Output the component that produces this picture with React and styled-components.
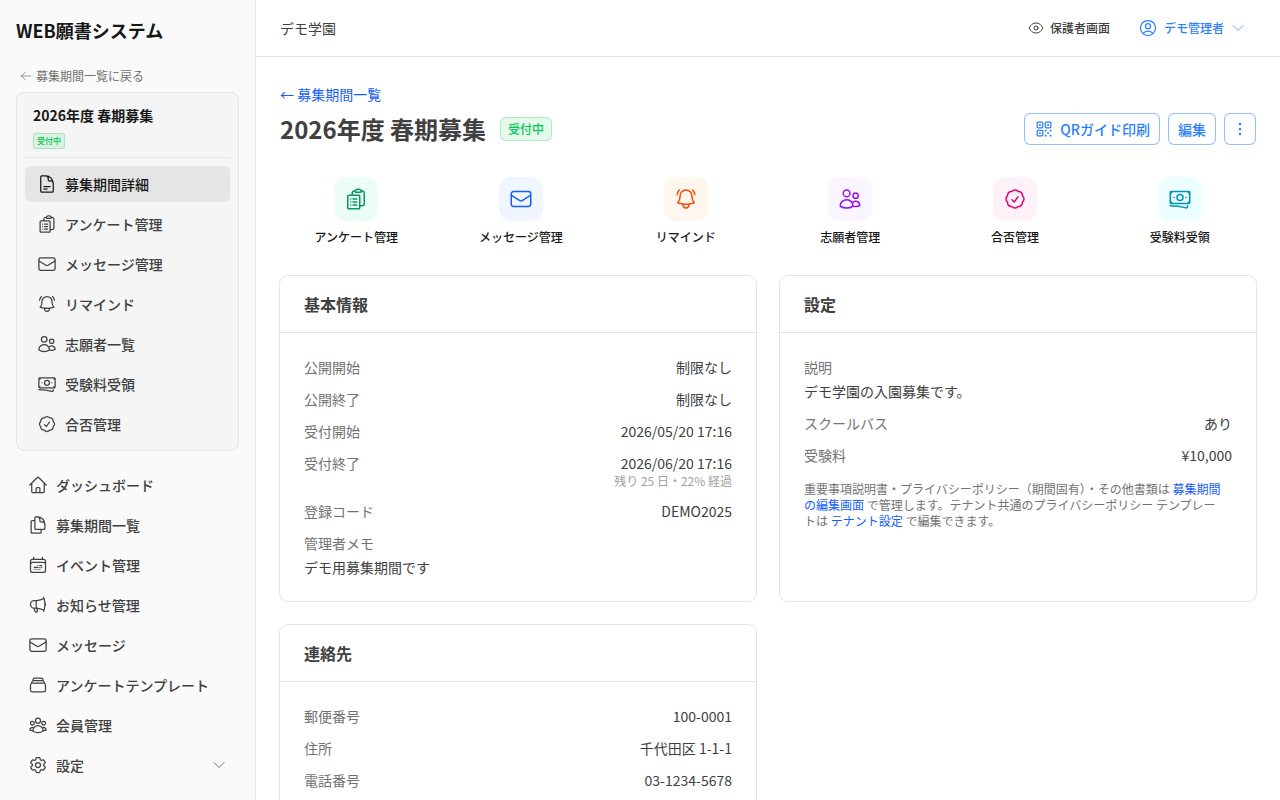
import React from "react";
import styled, { createGlobalStyle, css } from "styled-components";
import {
  HiOutlineArrowLeft,
  HiOutlineBanknotes,
  HiOutlineBellAlert,
  HiOutlineCalendarDateRange,
  HiOutlineCheckBadge,
  HiOutlineChevronDown,
  HiOutlineClipboardDocumentList,
  HiOutlineCog6Tooth,
  HiOutlineDocumentDuplicate,
  HiOutlineDocumentText,
  HiOutlineEllipsisVertical,
  HiOutlineEnvelope,
  HiOutlineEye,
  HiOutlineHome,
  HiOutlineMegaphone,
  HiOutlineQrCode,
  HiOutlineRectangleStack,
  HiOutlineUserCircle,
  HiOutlineUserGroup,
  HiOutlineUsers,
} from "react-icons/hi2";

const GlobalStyle = createGlobalStyle`
  *, *::before, *::after { box-sizing: border-box; }
  body {
    margin: 0;
    background: #ffffff;
    color: #404040;
    font-family: "Noto Sans CJK JP", sans-serif;
    font-size: 14px;
    line-height: 20px;
  }
  h1, h2, p, dl, dd, ul { margin: 0; padding: 0; }
  ul { list-style: none; }
  a { text-decoration: none; color: inherit; }
  button { font: inherit; margin: 0; cursor: pointer; }
  svg { flex: none; display: block; }
`;

const Shell = styled.div`
  display: flex;
  height: 100vh;
  overflow: hidden;
`;

const Sidebar = styled.aside`
  flex: none;
  width: 256px;
  padding: 16px;
  background: #fafafa;
  border-right: 1px solid #e5e5e5;
  overflow: hidden;
`;

const Brand = styled.div`
  font-size: 18px;
  line-height: 28px;
  font-weight: 700;
  color: #171717;
`;

const BackLink = styled.a`
  display: flex;
  align-items: center;
  gap: 4px;
  margin-top: 24px;
  padding: 0 4px;
  font-size: 12px;
  line-height: 16px;
  color: #737373;
`;

const PeriodPanel = styled.section`
  margin: 8px 0 16px;
  padding: 8px;
  background: #f5f5f5;
  border: 1px solid #e5e5e5;
  border-radius: 8px;
`;

const PeriodHead = styled.div`
  display: flex;
  flex-direction: column;
  align-items: flex-start;
  gap: 8px;
  padding: 4px 8px 8px;
  margin-bottom: 8px;
  border-bottom: 1px solid #e5e5e5;
`;

const PeriodName = styled.div`
  font-weight: 700;
  color: #171717;
`;

const Badge = styled.span`
  flex: none;
  font-weight: 500;
  color: #00c950;
  background: rgba(0, 201, 80, 0.1);
  box-shadow: inset 0 0 0 1px rgba(0, 201, 80, 0.25);
  ${({ $small }) =>
    $small
      ? css`
          padding: 2px 4px;
          border-radius: 3px;
          font-size: 8px;
          line-height: 12px;
        `
      : css`
          padding: 4px 8px;
          border-radius: 6px;
          font-size: 12px;
          line-height: 16px;
        `}
`;

const NavList = styled.ul`
  display: flex;
  flex-direction: column;
  gap: 4px;
`;

const NavLink = styled.a`
  display: flex;
  align-items: center;
  gap: 8px;
  width: 100%;
  padding: 8px 12px;
  border-radius: 6px;
  font-weight: 500;
  color: ${({ $active }) => ($active ? "#171717" : "#404040")};
  background: ${({ $active }) => ($active ? "#e5e5e5" : "transparent")};
`;

const NavToggle = styled(NavLink)`
  border: 0;
  text-align: left;
`;

const NavText = styled.span`
  flex: 1;
`;

const Faint = styled.span`
  color: ${({ $tone }) => $tone};
`;

const Column = styled.div`
  flex: 1;
  min-width: 0;
  display: flex;
  flex-direction: column;
`;

const TopBar = styled.header`
  flex: none;
  display: flex;
  align-items: center;
  justify-content: space-between;
  height: 57px;
  padding: 0 24px;
  border-bottom: 1px solid #e5e5e5;
`;

const TopActions = styled.div`
  display: flex;
  align-items: center;
  gap: 8px;
`;

const TopButton = styled.button`
  display: flex;
  align-items: center;
  gap: 6px;
  padding: 6px 10px;
  border: 0;
  background: transparent;
  font-size: 12px;
  line-height: 20px;
  font-weight: 500;
  color: ${({ $primary }) => ($primary ? "#2b7fff" : "#404040")};
`;

const Main = styled.main`
  flex: 1;
  min-height: 0;
  padding: 24px;
  overflow-y: auto;
  scrollbar-width: none;
`;

const Crumb = styled.a`
  display: block;
  width: fit-content;
  line-height: 26px;
  color: #155dfc;
`;

const TitleRow = styled.div`
  display: flex;
  align-items: center;
  justify-content: space-between;
  margin-top: 6px;
`;

const TitleGroup = styled.div`
  display: flex;
  align-items: center;
  gap: 14px;
`;

const Title = styled.h1`
  font-size: 24px;
  line-height: 32px;
  font-weight: 700;
`;

const ButtonGroup = styled.div`
  display: flex;
  gap: 8px;
`;

const OutlineButton = styled.button`
  display: flex;
  align-items: center;
  gap: 6px;
  height: 32px;
  padding: 0 ${({ $square }) => ($square ? 6 : 10)}px;
  border: 0;
  border-radius: 6px;
  background: transparent;
  box-shadow: inset 0 0 0 1px rgba(43, 127, 255, 0.5);
  color: #2b7fff;
  font-weight: 500;
`;

const QuickGrid = styled.nav`
  display: grid;
  grid-template-columns: repeat(6, minmax(0, 1fr));
  gap: 12px;
  margin: 32px 0;
`;

const QuickLink = styled.a`
  display: flex;
  flex-direction: column;
  align-items: center;
  gap: 8px;
  font-size: 12px;
  line-height: 15px;
  font-weight: 500;
  color: #171717;
`;

const QuickTile = styled.span`
  display: grid;
  place-items: center;
  width: 44px;
  height: 44px;
  border-radius: 12px;
  color: ${({ $fg }) => $fg};
  background: ${({ $bg }) => $bg};
`;

const CardGrid = styled.div`
  display: grid;
  grid-template-columns: repeat(2, minmax(0, 1fr));
  gap: 24px;
`;

const Card = styled.section`
  border-radius: 8px;
  box-shadow: 0 0 0 1px #e5e5e5;
`;

const CardTitle = styled.h2`
  padding: 16px 24px;
  border-bottom: 1px solid #e5e5e5;
  font-size: 16px;
  line-height: 24px;
  font-weight: 700;
`;

const CardBody = styled.div`
  padding: 24px;
`;

const Fields = styled.dl`
  display: flex;
  flex-direction: column;
  gap: 12px;
`;

const Field = styled.div`
  display: flex;
  flex-direction: ${({ $stacked }) => ($stacked ? "column" : "row")};
  justify-content: space-between;
  gap: 4px;
`;

const Label = styled.dt`
  color: #737373;
`;

const Value = styled.dd`
  text-align: ${({ $stacked }) => ($stacked ? "left" : "right")};
`;

const SubText = styled.div`
  font-size: 12px;
  line-height: 16px;
  color: #a1a1a1;
`;

const Note = styled.p`
  margin-top: 16px;
  padding-right: 8px;
  font-size: 12px;
  line-height: 16px;
  color: #737373;
`;

const NoteLink = styled.a`
  color: #155dfc;
`;

const periodNav = [
  { icon: HiOutlineDocumentText, text: "募集期間詳細", active: true },
  { icon: HiOutlineClipboardDocumentList, text: "アンケート管理" },
  { icon: HiOutlineEnvelope, text: "メッセージ管理" },
  { icon: HiOutlineBellAlert, text: "リマインド" },
  { icon: HiOutlineUsers, text: "志願者一覧" },
  { icon: HiOutlineBanknotes, text: "受験料受領" },
  { icon: HiOutlineCheckBadge, text: "合否管理" },
];

const mainNav = [
  { icon: HiOutlineHome, text: "ダッシュボード" },
  { icon: HiOutlineDocumentDuplicate, text: "募集期間一覧" },
  { icon: HiOutlineCalendarDateRange, text: "イベント管理" },
  { icon: HiOutlineMegaphone, text: "お知らせ管理" },
  { icon: HiOutlineEnvelope, text: "メッセージ" },
  { icon: HiOutlineRectangleStack, text: "アンケートテンプレート" },
  { icon: HiOutlineUserGroup, text: "会員管理" },
];

const quickLinks = [
  { icon: HiOutlineClipboardDocumentList, text: "アンケート管理", fg: "#009966", bg: "#ecfdf5" },
  { icon: HiOutlineEnvelope, text: "メッセージ管理", fg: "#155dfc", bg: "#eff6ff" },
  { icon: HiOutlineBellAlert, text: "リマインド", fg: "#f54900", bg: "#fff7ed" },
  { icon: HiOutlineUsers, text: "志願者管理", fg: "#9810fa", bg: "#faf5ff" },
  { icon: HiOutlineCheckBadge, text: "合否管理", fg: "#e60076", bg: "#fdf2f8" },
  { icon: HiOutlineBanknotes, text: "受験料受領", fg: "#0092b8", bg: "#ecfeff" },
];

const basicInfo = [
  { label: "公開開始", value: "制限なし" },
  { label: "公開終了", value: "制限なし" },
  { label: "受付開始", value: "2026/05/20 17:16" },
  { label: "受付終了", value: "2026/06/20 17:16", sub: "残り 25 日・22% 経過" },
  { label: "登録コード", value: "DEMO2025" },
  { label: "管理者メモ", value: "デモ用募集期間です", stacked: true },
];

const settings = [
  { label: "説明", value: "デモ学園の入園募集です。", stacked: true },
  { label: "スクールバス", value: "あり" },
  { label: "受験料", value: "¥10,000" },
];

const contact = [
  { label: "郵便番号", value: "100-0001" },
  { label: "住所", value: "千代田区 1-1-1" },
  { label: "電話番号", value: "03-1234-5678" },
];

function NavItems({ items }) {
  return items.map(({ icon: Icon, text, active }) => (
    <li key={text}>
      <NavLink href="#" $active={active} aria-current={active ? "page" : undefined}>
        <Icon size={20} />
        <NavText>{text}</NavText>
      </NavLink>
    </li>
  ));
}

function InfoCard({ title, fields, children }) {
  return (
    <Card>
      <CardTitle>{title}</CardTitle>
      <CardBody>
        <Fields>
          {fields.map(({ label, value, sub, stacked }) => (
            <Field key={label} $stacked={stacked}>
              <Label>{label}</Label>
              <Value $stacked={stacked}>
                {value}
                {sub && <SubText>{sub}</SubText>}
              </Value>
            </Field>
          ))}
        </Fields>
        {children}
      </CardBody>
    </Card>
  );
}

export default function App() {
  return (
    <>
      <GlobalStyle />
      <Shell>
        <Sidebar>
          <Brand>WEB願書システム</Brand>
          <BackLink href="#">
            <HiOutlineArrowLeft size={12} />
            募集期間一覧に戻る
          </BackLink>
          <PeriodPanel>
            <PeriodHead>
              <PeriodName>2026年度 春期募集</PeriodName>
              <Badge $small>受付中</Badge>
            </PeriodHead>
            <NavList>
              <NavItems items={periodNav} />
            </NavList>
          </PeriodPanel>
          <NavList>
            <NavItems items={mainNav} />
            <li>
              <NavToggle as="button" type="button" aria-expanded="false">
                <HiOutlineCog6Tooth size={20} />
                <NavText>設定</NavText>
                <Faint $tone="#737373">
                  <HiOutlineChevronDown size={16} />
                </Faint>
              </NavToggle>
            </li>
          </NavList>
        </Sidebar>
        <Column>
          <TopBar>
            <span>デモ学園</span>
            <TopActions>
              <TopButton type="button">
                <HiOutlineEye size={16} />
                保護者画面
              </TopButton>
              <TopButton type="button" $primary>
                <HiOutlineUserCircle size={20} />
                デモ管理者
                <Faint $tone="#60a5fa">
                  <HiOutlineChevronDown size={16} />
                </Faint>
              </TopButton>
            </TopActions>
          </TopBar>
          <Main>
            <Crumb href="#">← 募集期間一覧</Crumb>
            <TitleRow>
              <TitleGroup>
                <Title>2026年度 春期募集</Title>
                <Badge>受付中</Badge>
              </TitleGroup>
              <ButtonGroup>
                <OutlineButton type="button">
                  <HiOutlineQrCode size={20} />
                  QRガイド印刷
                </OutlineButton>
                <OutlineButton type="button">編集</OutlineButton>
                <OutlineButton type="button" $square aria-label="その他の操作">
                  <HiOutlineEllipsisVertical size={20} />
                </OutlineButton>
              </ButtonGroup>
            </TitleRow>
            <QuickGrid>
              {quickLinks.map(({ icon: Icon, text, fg, bg }) => (
                <QuickLink href="#" key={text}>
                  <QuickTile $fg={fg} $bg={bg}>
                    <Icon size={24} />
                  </QuickTile>
                  {text}
                </QuickLink>
              ))}
            </QuickGrid>
            <CardGrid>
              <InfoCard title="基本情報" fields={basicInfo} />
              <InfoCard title="設定" fields={settings}>
                <Note>
                  重要事項説明書・プライバシーポリシー（期間固有）・その他書類は{" "}
                  <NoteLink href="#">募集期間の編集画面</NoteLink>{" "}
                  で管理します。テナント共通のプライバシーポリシー テンプレートは{" "}
                  <NoteLink href="#">テナント設定</NoteLink> で編集できます。
                </Note>
              </InfoCard>
              <InfoCard title="連絡先" fields={contact} />
            </CardGrid>
          </Main>
        </Column>
      </Shell>
    </>
  );
}
